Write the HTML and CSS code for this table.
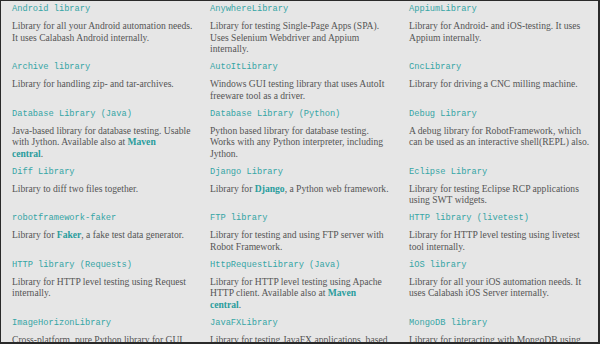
FILE: index.html
```html
<!DOCTYPE html>
<html>
<head>
<meta charset="utf-8">
<link rel="stylesheet" href="styles.css">
</head>
<body>
<div class="frame">
  <div class="grid">
    <div class="cell"><div class="name">Android library</div><p class="desc">Library for all your Android automation needs.<br>It uses Calabash Android internally.</p></div>
    <div class="cell"><div class="name">AnywhereLibrary</div><p class="desc">Library for testing Single-Page Apps (SPA).<br>Uses Selenium Webdriver and Appium<br>internally.</p></div>
    <div class="cell"><div class="name">AppiumLibrary</div><p class="desc">Library for Android- and iOS-testing. It uses<br>Appium internally.</p></div>

    <div class="cell"><div class="name">Archive library</div><p class="desc">Library for handling zip- and tar-archives.</p></div>
    <div class="cell"><div class="name">AutoItLibrary</div><p class="desc">Windows GUI testing library that uses AutoIt<br>freeware tool as a driver.</p></div>
    <div class="cell"><div class="name">CncLibrary</div><p class="desc">Library for driving a CNC milling machine.</p></div>

    <div class="cell"><div class="name">Database Library (Java)</div><p class="desc">Java-based library for database testing. Usable<br>with Jython. Available also at <a class="link">Maven<br>central</a>.</p></div>
    <div class="cell"><div class="name">Database Library (Python)</div><p class="desc">Python based library for database testing.<br>Works with any Python interpreter, including<br>Jython.</p></div>
    <div class="cell"><div class="name">Debug Library</div><p class="desc">A debug library for RobotFramework, which<br>can be used as an interactive shell(REPL) also.</p></div>

    <div class="cell"><div class="name">Diff Library</div><p class="desc">Library to diff two files together.</p></div>
    <div class="cell"><div class="name">Django Library</div><p class="desc">Library for <a class="link">Django</a>, a Python web framework.</p></div>
    <div class="cell"><div class="name">Eclipse Library</div><p class="desc">Library for testing Eclipse RCP applications<br>using SWT widgets.</p></div>

    <div class="cell"><div class="name">robotframework-faker</div><p class="desc">Library for <a class="link">Faker</a>, a fake test data generator.</p></div>
    <div class="cell"><div class="name">FTP library</div><p class="desc">Library for testing and using FTP server with<br>Robot Framework.</p></div>
    <div class="cell"><div class="name">HTTP library (livetest)</div><p class="desc">Library for HTTP level testing using livetest<br>tool internally.</p></div>

    <div class="cell"><div class="name">HTTP library (Requests)</div><p class="desc">Library for HTTP level testing using Request<br>internally.</p></div>
    <div class="cell"><div class="name">HttpRequestLibrary (Java)</div><p class="desc">Library for HTTP level testing using Apache<br>HTTP client. Available also at <a class="link">Maven<br>central</a>.</p></div>
    <div class="cell"><div class="name">iOS library</div><p class="desc">Library for all your iOS automation needs. It<br>uses Calabash iOS Server internally.</p></div>

    <div class="cell"><div class="name">ImageHorizonLibrary</div><p class="desc">Cross-platform, pure Python library for GUI<br>automation based on image recognition.</p></div>
    <div class="cell"><div class="name">JavaFXLibrary</div><p class="desc">Library for testing JavaFX applications, based<br>on TestFX.</p></div>
    <div class="cell"><div class="name">MongoDB library</div><p class="desc">Library for interacting with MongoDB using<br>pymongo.</p></div>
  </div>
</div>
</body>
</html>
```
FILE: styles.css
```css
html, body {
  margin: 0;
  padding: 0;
  background: #e6e6e6;
}
.frame {
  box-sizing: border-box;
  width: 600px;
  height: 344px;
  overflow: hidden;
  background: #e6e6e6;
  border-top: 1px solid #2a2a2a;
  border-left: 1px solid #2a2a2a;
  border-right: 2px solid #2a2a2a;
  border-bottom: 2px solid #2a2a2a;
  padding: 2px 0 0 11px;
}
.grid {
  display: grid;
  grid-template-columns: 198px 199px 1fr;
}
.cell {
  padding-bottom: 6.5px;
}
.name {
  font-family: "Liberation Mono", "Courier New", monospace;
  font-size: 8.7px;
  line-height: 12px;
  color: #35a5a5;
  white-space: nowrap;
}
.desc {
  margin: 5px 0 0 0;
  font-family: "Liberation Serif", "Times New Roman", serif;
  font-size: 9.6px;
  line-height: 11.5px;
  color: #555555;
  white-space: nowrap;
}
.link {
  color: #2a9d9d;
  font-weight: bold;
}
```
